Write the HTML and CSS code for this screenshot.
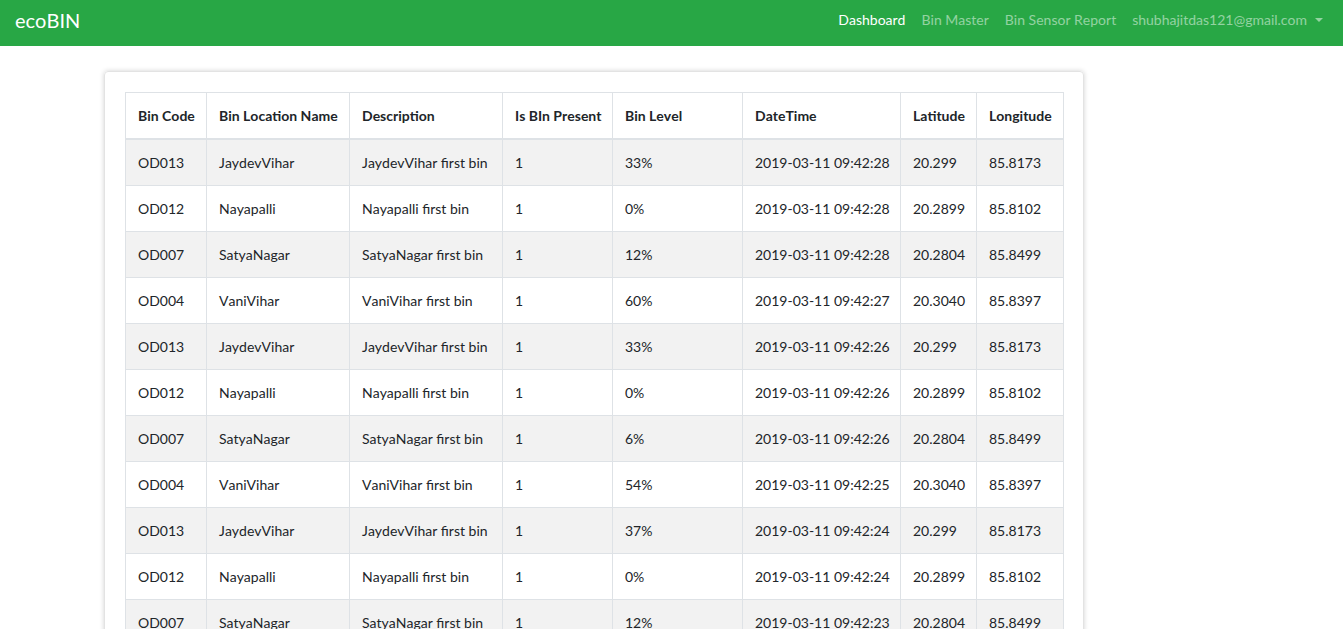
FILE: index.html
```html
<!DOCTYPE html>
<html>
<head>
<meta charset="utf-8">
<title>ecoBIN</title>
<link rel="stylesheet" href="styles.css">
</head>
<body>
<nav class="navbar">
  <a class="brand" href="#">ecoBIN</a>
  <ul class="nav">
    <li><a class="nav-link active" href="#">Dashboard</a></li>
    <li><a class="nav-link" href="#">Bin Master</a></li>
    <li><a class="nav-link" href="#">Bin Sensor Report</a></li>
    <li><a class="nav-link dropdown-toggle" href="#">shubhajitdas121@gmail.com</a></li>
  </ul>
</nav>
<main class="page">
  <div class="card">
    <table class="table">
      <colgroup>
        <col class="c1"><col class="c2"><col class="c3"><col class="c4"><col class="c5"><col class="c6"><col class="c7"><col class="c8">
      </colgroup>
      <thead>
        <tr><th>Bin Code</th><th>Bin Location Name</th><th>Description</th><th>Is BIn Present</th><th>Bin Level</th><th>DateTime</th><th>Latitude</th><th>Longitude</th></tr>
      </thead>
      <tbody>
        <tr><td>OD013</td><td>JaydevVihar</td><td>JaydevVihar first bin</td><td>1</td><td>33%</td><td>2019-03-11 09:42:28</td><td>20.299</td><td>85.8173</td></tr>
        <tr><td>OD012</td><td>Nayapalli</td><td>Nayapalli first bin</td><td>1</td><td>0%</td><td>2019-03-11 09:42:28</td><td>20.2899</td><td>85.8102</td></tr>
        <tr><td>OD007</td><td>SatyaNagar</td><td>SatyaNagar first bin</td><td>1</td><td>12%</td><td>2019-03-11 09:42:28</td><td>20.2804</td><td>85.8499</td></tr>
        <tr><td>OD004</td><td>VaniVihar</td><td>VaniVihar first bin</td><td>1</td><td>60%</td><td>2019-03-11 09:42:27</td><td>20.3040</td><td>85.8397</td></tr>
        <tr><td>OD013</td><td>JaydevVihar</td><td>JaydevVihar first bin</td><td>1</td><td>33%</td><td>2019-03-11 09:42:26</td><td>20.299</td><td>85.8173</td></tr>
        <tr><td>OD012</td><td>Nayapalli</td><td>Nayapalli first bin</td><td>1</td><td>0%</td><td>2019-03-11 09:42:26</td><td>20.2899</td><td>85.8102</td></tr>
        <tr><td>OD007</td><td>SatyaNagar</td><td>SatyaNagar first bin</td><td>1</td><td>6%</td><td>2019-03-11 09:42:26</td><td>20.2804</td><td>85.8499</td></tr>
        <tr><td>OD004</td><td>VaniVihar</td><td>VaniVihar first bin</td><td>1</td><td>54%</td><td>2019-03-11 09:42:25</td><td>20.3040</td><td>85.8397</td></tr>
        <tr><td>OD013</td><td>JaydevVihar</td><td>JaydevVihar first bin</td><td>1</td><td>37%</td><td>2019-03-11 09:42:24</td><td>20.299</td><td>85.8173</td></tr>
        <tr><td>OD012</td><td>Nayapalli</td><td>Nayapalli first bin</td><td>1</td><td>0%</td><td>2019-03-11 09:42:24</td><td>20.2899</td><td>85.8102</td></tr>
        <tr><td>OD007</td><td>SatyaNagar</td><td>SatyaNagar first bin</td><td>1</td><td>12%</td><td>2019-03-11 09:42:23</td><td>20.2804</td><td>85.8499</td></tr>
        <tr><td>OD004</td><td>VaniVihar</td><td>VaniVihar first bin</td><td>1</td><td>60%</td><td>2019-03-11 09:42:23</td><td>20.3040</td><td>85.8397</td></tr>
      </tbody>
    </table>
  </div>
</main>
</body>
</html>
```
FILE: styles.css
```css
* { box-sizing: border-box; }
html, body { margin: 0; padding: 0; }
body {
  font-family: Lato, "Noto Sans", sans-serif;
  font-size: 14px;
  line-height: 1.5;
  color: #212529;
  background: #fff;
  font-kerning: none;
}
a { text-decoration: none; }
.navbar {
  height: 46px;
  background: #28a745;
  display: flex;
  align-items: center;
  justify-content: space-between;
  padding: 0 12px 0 15px;
}
.brand {
  color: #fff;
  font-size: 20px;
  line-height: 30px;
  margin-top: -6px;
}
.nav {
  list-style: none;
  margin: 0;
  padding: 0;
  display: flex;
  margin-top: -7px;
}
.nav-link {
  display: block;
  padding: 0 8px;
  color: rgba(255,255,255,.5);
  font-size: 14px;
  line-height: 21px;
}
.nav-link.active { color: #fff; }
.dropdown-toggle::after {
  content: "";
  display: inline-block;
  margin-left: 8px;
  vertical-align: 3px;
  border-top: 4px solid;
  border-left: 4px solid transparent;
  border-right: 4px solid transparent;
}
.page {
  padding: 25px 0 0 104px;
}
.card {
  width: 980px;
  border: 1px solid #e3e3e3;
  border-radius: 4px;
  box-shadow: 0 0 5px rgba(0,0,0,.18);
  padding: 20px 20px;
}
.table {
  width: 938px;
  border-collapse: collapse;
  table-layout: fixed;
}
.c1 { width: 81px; }
.c2 { width: 143px; }
.c3 { width: 153px; }
.c4 { width: 110px; }
.c5 { width: 130px; }
.c6 { width: 158px; }
.c7 { width: 76px; }
.c8 { width: 87px; }
.table th, .table td {
  border: 1px solid #dee2e6;
  padding: 12px;
  text-align: left;
  vertical-align: top;
  white-space: nowrap;
  font-size: 14px;
  line-height: 21px;
}
.table th { font-weight: 700; }
.table thead th { border-bottom: 2px solid #dee2e6; }
.table tbody tr:nth-child(odd) { background: #f2f2f2; }
```
